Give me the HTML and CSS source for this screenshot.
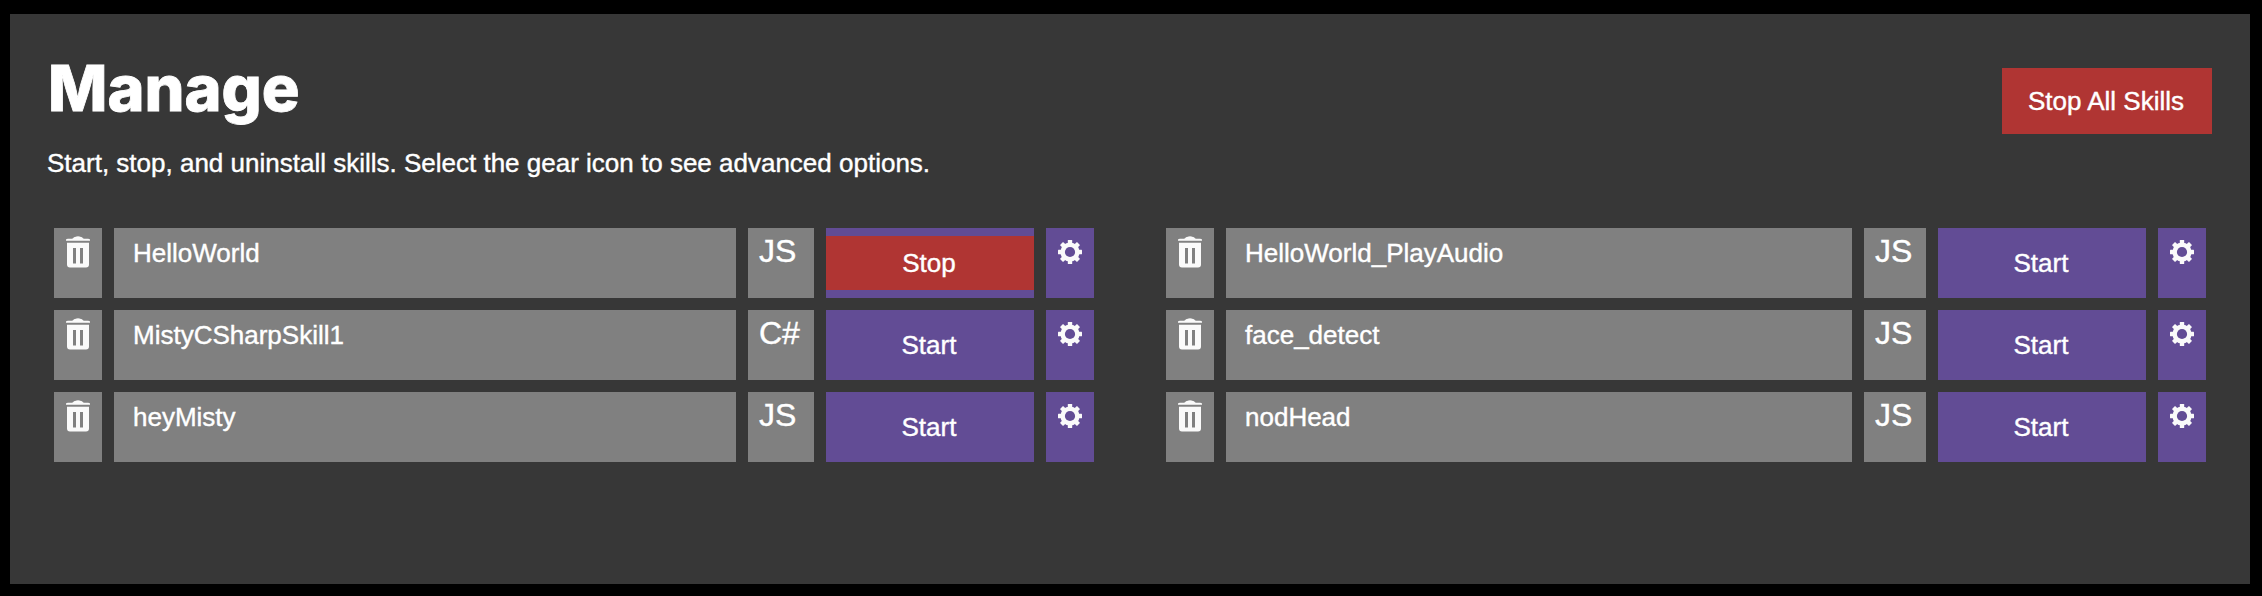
FILE: index.html
```
<!DOCTYPE html>
<html lang="en">
<head>
<meta charset="utf-8">
<title>Manage</title>
<link rel="stylesheet" href="styles.css">
</head>
<body>
<svg class="symbols" width="0" height="0" aria-hidden="true">
  <symbol id="trash" viewBox="0 0 24 32">
    <path fill-rule="evenodd" d="M0 4.8V3.6Q.6 2.8 2 2.8H6Q7.3 2.4 7.7 1.4Q8.5.8 10 .8Q11 0 12 .6Q13 0 14 .8Q15.500 .8 16.300 1.400Q16.700 2.400 18 2.800H22Q23.400 2.800 24 3.600V4.800ZM1 6.800H23V28.500Q23 31.500 20 31.500H4Q1 31.500 1 28.500ZM7 12V27.500H10V12ZM14 12V27.500H17V12Z"/>
  </symbol>
  <symbol id="gear" viewBox="-12 -12 24 24">
    <g id="teeth">
      <rect x="-2.200" y="-12" width="4.400" height="24" rx=".5"/>
      <rect x="-12" y="-2.200" width="24" height="4.400" rx=".5"/>
    </g>
    <use href="#teeth" transform="rotate(45)"/>
    <circle r="9.600"/>
    <circle r="5.100" class="gear-hole"/>
  </symbol>
</svg>
<main class="panel">
  <header class="head">
    <div>
      <h1 class="title">Manage</h1>
      <p class="intro">Start, stop, and uninstall skills. Select the gear icon to see advanced options.</p>
    </div>
    <button class="stop-all">Stop All Skills</button>
  </header>
  <section class="skills">
    <div class="list">
      <div class="row"><div class="cell del"><svg class="trash"><use href="#trash"/></svg></div><div class="cell name">HelloWorld</div><div class="cell lang">JS</div><div class="action"><button class="btn stop">Stop</button></div><div class="opts"><svg class="gear"><use href="#gear"/></svg></div></div>
      <div class="row"><div class="cell del"><svg class="trash"><use href="#trash"/></svg></div><div class="cell name">MistyCSharpSkill1</div><div class="cell lang">C#</div><div class="action"><button class="btn">Start</button></div><div class="opts"><svg class="gear"><use href="#gear"/></svg></div></div>
      <div class="row"><div class="cell del"><svg class="trash"><use href="#trash"/></svg></div><div class="cell name">heyMisty</div><div class="cell lang">JS</div><div class="action"><button class="btn">Start</button></div><div class="opts"><svg class="gear"><use href="#gear"/></svg></div></div>
    </div>
    <div class="list list-narrow">
      <div class="row"><div class="cell del"><svg class="trash"><use href="#trash"/></svg></div><div class="cell name">HelloWorld_PlayAudio</div><div class="cell lang">JS</div><div class="action"><button class="btn">Start</button></div><div class="opts"><svg class="gear"><use href="#gear"/></svg></div></div>
      <div class="row"><div class="cell del"><svg class="trash"><use href="#trash"/></svg></div><div class="cell name">face_detect</div><div class="cell lang">JS</div><div class="action"><button class="btn">Start</button></div><div class="opts"><svg class="gear"><use href="#gear"/></svg></div></div>
      <div class="row"><div class="cell del"><svg class="trash"><use href="#trash"/></svg></div><div class="cell name">nodHead</div><div class="cell lang">JS</div><div class="action"><button class="btn">Start</button></div><div class="opts"><svg class="gear"><use href="#gear"/></svg></div></div>
    </div>
  </section>
</main>
</body>
</html>
```

FILE: styles.css
```
* { box-sizing: border-box; }
body {
  margin: 0;
  height: 596px;
  padding: 14px 12px 12px 10px;
  background: #000;
  color: #fff;
  font: 26px/30px "Liberation Sans", Arial, sans-serif;
  -webkit-text-stroke: 0.4px #fff;
  overflow: hidden;
}
.symbols { display: block; width: 0; height: 0; }
.panel { height: 570px; background: #373737; }
.head {
  display: flex;
  justify-content: space-between;
  align-items: flex-start;
  height: 214px;
  padding: 34px 38px 0 37px;
}
.title {
  margin: 0;
  padding-left: 1px;
  font: 800 63px/80px Inter, sans-serif;
  -webkit-text-stroke: 0.8px #fff;
}
.intro { margin: 20px 0 0; white-space: nowrap; }
button {
  border: 0;
  border-radius: 0;
  color: #fff;
  font: 26px/30px "Liberation Sans", Arial, sans-serif;
  -webkit-text-stroke: 0.4px #fff;
}
.stop-all {
  width: 210px;
  height: 66px;
  margin-top: 20px;
  padding: 0 2px 1px 0;
  background: #b03533;
  white-space: nowrap;
}
.skills { display: flex; gap: 72px; padding-left: 44px; }
.list { display: grid; gap: 12px; width: 1040px; }
.row {
  display: grid;
  grid-template-columns: 48px 622px 66px 208px 48px;
  gap: 12px;
  height: 70px;
}
.list-narrow .row { grid-template-columns: 48px 626px 62px 208px 48px; }
.cell { background: #808080; }
.del { padding: 8px 12px; }
.trash { display: block; width: 24px; height: 32px; fill: #fafafa; }
.name { padding: 10px 19px; }
.lang { padding: 5px 11px; font-size: 32px; line-height: 36px; }
.action, .opts { background: #624c95; }
.action { padding: 8px 0; }
.btn { display: block; width: 100%; height: 54px; padding: 0 2px 1px 0; background: transparent; }
.stop { background: #b03533; }
.opts { padding: 12px; }
.gear { display: block; width: 24px; height: 24px; fill: #fafafa; }
.gear-hole { fill: #624c95; }
```
